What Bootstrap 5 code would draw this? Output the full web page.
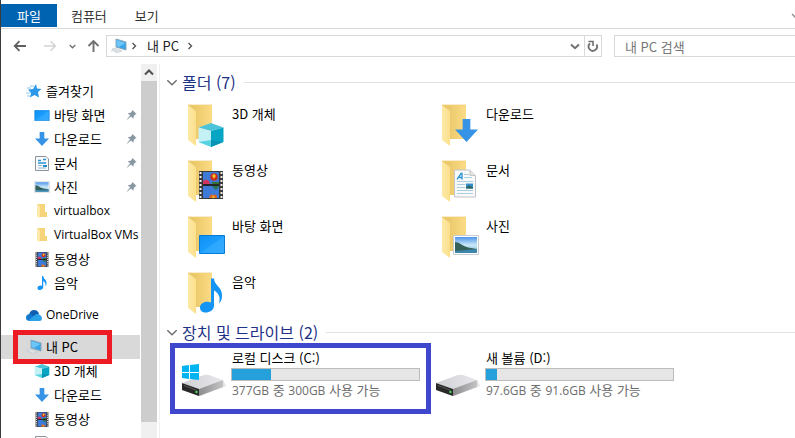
<!DOCTYPE html>
<html lang="ko">
<head>
<meta charset="utf-8">
<meta name="viewport" content="width=device-width, initial-scale=1">
<title>내 PC</title>
<link href="https://cdn.jsdelivr.net/npm/bootstrap@5.3.0/dist/css/bootstrap.min.css" rel="stylesheet">
<style>
body{font-family:"Noto Sans CJK KR",sans-serif;font-size:13px;line-height:18px;color:#000;background:#fff}
.window{border-left:1px solid #3c3c3c}
button{line-height:18px}
.latin{font-family:"Open Sans","Noto Sans",sans-serif;font-size:12px}
.tabs{height:29px;padding-top:4px;border-bottom:1px solid #dadbdc}
.tab{border:0;background:none;padding:0 14px;height:23px;color:#333}
.tab.current{background:#0063b1;color:#fff;padding:0 16px}
.ribbon-toggle{width:10px;height:23px;flex:none}
.tool{border:0;background:none;padding:0;color:#707070;display:flex;align-items:center;justify-content:center}
.toolbar{height:35px;padding:6px 0 7px 12px}
.arrow{width:14px}
.recent{width:8px;margin:0 10px 0 11px}
.address{border:1px solid #d9d9d9;height:22px;margin-left:6px}
.address a{color:#222;padding-left:2px}
.refresh{width:17px;border-left:1px solid #d9d9d9}
.search{width:182px;height:22px;margin:0 -1px 0 12px;border:1px solid #d9d9d9;padding:0 10px;font-size:13px;line-height:18px;outline:0}
.search::placeholder{color:#767676;opacity:1}
.side{width:139px;padding-top:15px}
.side a{height:24px;color:#000;padding-left:25px;white-space:nowrap;flex:none}
.side a.child{padding-left:33px}
.side a.selected{background:#d9d9d9}
.side svg{flex:none}
.side .pin{margin-left:auto;margin-right:3px}
.bar{width:17px;background:#f0f0f0;border-right:1px solid #fff;margin-left:1px}
.bar button{height:17px;width:16px}
.thumb{background:#cdcdcd;flex:0 1 341px}
.pane{border-left:1px solid #f0f0f0;margin-left:1px;padding:7px 0 0 6px;min-width:0}
.group-head{padding-top:1px;margin-bottom:9px}
.group-head.drives{margin-bottom:6px}
.group-title{font-size:16px;line-height:20px;color:#1e3287;margin:0;font-weight:400}
.rule{height:1px;background:#e2e2e2}
.tiles{display:grid;grid-template-columns:repeat(auto-fill,254px);row-gap:4px;padding-left:14px}
.tile{height:52px;color:#000}
.tile svg{flex:none}
.tile .label{padding:4px 0 0 1px}
.drive{color:#000}
.name{line-height:20px;padding-left:1px}
.free{line-height:17px;color:#6d6d6d;padding-left:1px}
.usage{width:189px;height:13px;border:1px solid #bcbcbc;border-radius:0;background:#e6e6e6}
.usage .progress-bar{background:#26a0da}
.outline{pointer-events:none}
.outline.red{border:5px solid #ed1c24;left:12px;top:-5px;width:99px;height:34px}
.outline.blue{border:5px solid #3f48cc;left:-10px;top:-5px;width:261px;height:71px}
</style>
<script src="https://cdn.jsdelivr.net/npm/bootstrap@5.3.0/dist/js/bootstrap.bundle.min.js"></script>
</head>
<body>
<svg width="0" height="0" class="position-absolute" aria-hidden="true">
<defs>
<linearGradient id="gBack" x1="0" x2="1"><stop offset="0" stop-color="#e5c160"/><stop offset="1" stop-color="#fbdc85"/></linearGradient>
<linearGradient id="gFlap" x1="0" x2="1"><stop offset="0" stop-color="#fde9a6"/><stop offset="1" stop-color="#fbdf8c"/></linearGradient>
<linearGradient id="gBlue" x1="0" y1="0" x2="1" y2="1"><stop offset="0" stop-color="#0c90f5"/><stop offset=".5" stop-color="#1a9dfc"/><stop offset=".52" stop-color="#2ba7ff"/><stop offset="1" stop-color="#37abff"/></linearGradient>
<linearGradient id="gSky" x1="0" y1="0" x2="0" y2="1"><stop offset="0" stop-color="#4d94ea"/><stop offset=".5" stop-color="#c9e8f8"/><stop offset="1" stop-color="#79b7d8"/></linearGradient>
<linearGradient id="gDisk" x1="0" x2="1"><stop offset="0" stop-color="#cfd0d4"/><stop offset="1" stop-color="#e8e8ec"/></linearGradient>
<linearGradient id="gSide" x1="0" x2="1"><stop offset="0" stop-color="#8d8d90"/><stop offset="1" stop-color="#c3c3c6"/></linearGradient>
</defs>
<symbol id="folder" viewBox="-4 0 51 48"><path d="M4 4H28V38H12z" fill="url(#gBack)"/><path d="M4 4L12 10V45L4 39z" fill="url(#gFlap)"/><path d="M4 4H28" stroke="#f2d27c" stroke-width=".8"/></symbol>
<symbol id="cube" viewBox="0 0 26 24"><path d="M13 0L25.500 4.500 13 8 .5 4.500z" fill="#4cc3d9"/><path d="M.5 4.500L13 8V24L.5 19z" fill="#c4f1f6"/><path d="M13 8L25.500 4.500V19L13 24z" fill="#08a5c5"/><path d="M13 17L25 19 13 24z" fill="#0794b4"/><path d="M13 17L.5 19 13 24z" fill="#59d3e2"/></symbol>
<symbol id="down" viewBox="0 0 24 24"><path d="M8 0H16V11H24L12 24 0 11H8z" fill="#3793e6"/></symbol>
<symbol id="film" viewBox="0 0 24 28"><path d="M0 0H24V28H0z" fill="#393939"/><path d="M1.500 1V28M22.500 1V28" stroke="#eee" stroke-width="2" stroke-dasharray="2 2"/><path d="M4 1H20V13H4zM4 15H20V27H4z" fill="#3e7bd8"/><circle cx="15" cy="6" r="3.700" fill="#c82c20"/><path d="M13 5L15 2.500 17 5 15 8z" fill="#f2bb22"/><path d="M4 10Q7 7 10 10L11 13H4z" fill="#cf355f"/><path d="M12 11H20V13H14z" fill="#327339"/><path d="M4 14H20" stroke="#222" stroke-width="1.500"/><path d="M13 15H20L17 19z" fill="#257348"/><path d="M10 27Q11 22 14 24 18 22 18 27z" fill="#d9652a"/><path d="M13 27L14 24 16 27z" fill="#f2bb22"/></symbol>
<symbol id="desk" viewBox="0 0 26 19"><path d="M.5.5H25.500V18.500H.5z" fill="url(#gBlue)" stroke="#087bd5"/></symbol>
<symbol id="note" viewBox="0 0 22 34"><path d="M11 0H14C14 7 22 8 22 17 22 21 21 23 19 25 21 18 18 14 14 12V27C14 32 9 34 6 34 2 34 0 32 0 29 0 25 5 22 11 24z" fill="#1494f5"/></symbol>
<symbol id="doc" viewBox="0 0 22 28"><path d="M.5.5H16L21.500 6V27.500H.5z" fill="#f9f9f9" stroke="#c4c4c8"/><path d="M16 .5V6H21.500" fill="#e5e5e5" stroke="#c4c4c8"/><path d="M3 10L7 4H8V10M5 8H8" fill="none" stroke="#2490cf" stroke-width="1.300"/><path d="M10 5H15M10 8H18M3 12H19M3 15H11M3 18H11M3 21H19M3 24H19" stroke="#a9cfe2" stroke-width="1"/><path d="M12 14H19V19H12z" fill="#328cca"/><path d="M12 18L15 16 19 18V19H12z" fill="#2a6355"/></symbol>
<symbol id="smalldoc" viewBox="0 0 14 15"><path d="M1 .5H11L13.500 3V14.500H.5V.5z" fill="#fafafa" stroke="#8b949c"/><path d="M3 4.500H6M8 3.500H11M3 7H11" stroke="#2b94d8" stroke-width="1.500"/><path d="M3 9.500H7M3 12H11" stroke="#8fb6d0"/><path d="M8 9H12V11H8z" fill="#2889c9"/></symbol>
<symbol id="photo" viewBox="0 0 26 20"><path d="M.5.5H25.500V19.500H.5z" fill="#fff" stroke="#c6ccd1"/><path d="M2 2H24V18H2z" fill="url(#gSky)"/><path d="M2 7C7 7 10 12 18 13L24 14V16H2z" fill="#35605a"/><path d="M2 16L24 14V18H2z" fill="#3d85ab"/></symbol>
<symbol id="disk" viewBox="-4 0 51 48"><path d="M-2 42L15 48.500 42 38 39 32z" fill="#e4e4e4"/><path d="M-2 35L20 27Q22 26.500 25 27L39 32 15 41z" fill="url(#gDisk)"/><path d="M15 41L39 32V39L15 48z" fill="url(#gSide)"/><path d="M-2 35L15 41V48L-2 42z" fill="#292929"/><path d="M0 37.500L12 42V45" fill="none" stroke="#555"/><circle cx="12.500" cy="44" r="1.200" fill="#44d457"/></symbol>
<symbol id="pc" viewBox="0 0 16 16"><path d="M5 1L15 4V12L5 9z" fill="#36a5e9" stroke="#8da6b8"/><path d="M5.500 2L14.500 5 8 9 5.500 8z" fill="#6ec6f8"/><path d="M1 11L4 10 11 13 7 14.500z" fill="#dfe5e9" stroke="#bcc5cb" stroke-width=".6"/><path d="M0 13L2 12.500 6 15" fill="none" stroke="#cbd2d8"/></symbol>
<symbol id="pinned" viewBox="0 0 12 12"><path d="M7 .5L11.500 5 10 5.500 8.500 7 8 10 5.500 7.500 1.500 11 1 10.500 4.500 6.500 2 4 5 3.500 6.500 2z" fill="#8997a3"/></symbol>
<symbol id="minifolder" viewBox="0 0 10 14"><path d="M0 0H8V8H10V13H3z" fill="#f6d479"/><path d="M0 0L3 2V14L0 12.500z" fill="#ffe9a8"/></symbol>
<symbol id="chev" viewBox="0 0 10 6"><path d="M1 1L5 5 9 1" fill="none" stroke="#6d6d6d" stroke-width="1.200"/></symbol>
<symbol id="boldchev" viewBox="0 0 10 6"><path d="M1 1L5 4.700 9 1" fill="none" stroke="currentColor" stroke-width="2"/></symbol>
<symbol id="next" viewBox="0 0 5 8"><path d="M1 1L4 4 1 7" fill="none" stroke="#555" stroke-width="1.400"/></symbol>
</svg>

<div class="window vh-100 d-flex flex-column overflow-hidden">
<header>
  <div class="tabs d-flex align-items-start">
    <button class="tab current" type="button">파일</button>
    <button class="tab" type="button">컴퓨터</button>
    <button class="tab" type="button">보기</button>
    <button class="tool ribbon-toggle ms-auto" type="button" aria-label="리본 확장"><svg width="10" height="6" viewBox="-6 0 10 6"><path d="M1 1L5 5" stroke="#888" stroke-width="1.300"/></svg></button>
  </div>
  <div class="toolbar d-flex align-items-center">
    <button class="tool arrow" type="button" aria-label="뒤로"><svg width="14" height="12" viewBox="0 0 14 12" fill="none" stroke="#606060" stroke-width="1.800"><path d="M13 6H2M6.500 1.200L1.700 6 6.500 10.800"/></svg></button>
    <button class="tool arrow ms-3" type="button" aria-label="앞으로"><svg width="14" height="12" viewBox="0 0 14 12" fill="none" stroke="#d4d4d4" stroke-width="1.600"><path d="M1 6H12M7.500 1.200L12.300 6 7.500 10.800"/></svg></button>
    <button class="tool recent" type="button" aria-label="최근 위치"><svg width="7" height="5"><use href="#boldchev"/></svg></button>
    <button class="tool arrow" type="button" aria-label="위로"><svg width="13" height="14" viewBox="0 0 13 14" fill="none" stroke="#707070" stroke-width="1.900"><path d="M6.500 13V2M1.500 7L6.500 2 11.500 7"/></svg></button>
    <div class="address d-flex align-items-stretch flex-grow-1">
      <div class="d-flex align-items-center flex-grow-1 ps-1">
        <svg width="16" height="16"><use href="#pc"/></svg>
        <svg class="ms-1" width="6" height="8"><use href="#next"/></svg>
        <a href="#" class="text-decoration-none mx-2">내 PC</a>
        <svg width="6" height="8"><use href="#next"/></svg>
      </div>
      <button class="tool px-1" type="button" aria-label="이전 위치"><svg width="10" height="7"><use href="#boldchev"/></svg></button>
      <button class="tool refresh" type="button" aria-label="새로 고침"><svg width="12" height="13" viewBox="0 0 12 13"><path d="M3 3.500A4.200 4.200 0 1 0 9.500 4.500" fill="none" stroke="#707070" stroke-width="1.800"/><path d="M1.500 1.500H6V6" fill="none" stroke="#707070" stroke-width="1.600"/></svg></button>
    </div>
    <input class="search" type="text" placeholder="내 PC 검색" aria-label="내 PC 검색">
  </div>
</header>
<div class="d-flex flex-grow-1 overflow-hidden">
  <nav class="side d-flex flex-column flex-shrink-0 overflow-hidden" aria-label="탐색 창">
    <a href="#" class="d-flex align-items-center gap-1 text-decoration-none"><svg width="16" height="14" viewBox="0 0 16 14"><path d="M10 0L11 4.500 15.500 5 12 8 13 13.500 8.500 11 4 13.500 5 9 2 5.500 7 5z" fill="#2b98e8"/><path d="M4 2H8M1 4H5M0 9H4M1 12H4" stroke="#8fcaf2"/></svg>즐겨찾기</a>
    <a href="#" class="child d-flex align-items-center text-decoration-none"><svg class="me-1" width="16" height="11"><use href="#desk"/></svg>바탕 화면<svg class="pin" width="11" height="12"><use href="#pinned"/></svg></a>
    <a href="#" class="child d-flex align-items-center text-decoration-none"><svg class="me-1" width="16" height="14"><use href="#down"/></svg>다운로드<svg class="pin" width="11" height="12"><use href="#pinned"/></svg></a>
    <a href="#" class="child d-flex align-items-center text-decoration-none"><svg class="me-1" width="16" height="15"><use href="#smalldoc"/></svg>문서<svg class="pin" width="11" height="12"><use href="#pinned"/></svg></a>
    <a href="#" class="child d-flex align-items-center text-decoration-none"><svg class="me-1" width="16" height="12"><use href="#photo"/></svg>사진<svg class="pin" width="11" height="12"><use href="#pinned"/></svg></a>
    <a href="#" class="child d-flex align-items-center text-decoration-none"><svg class="me-1" width="16" height="14"><use href="#minifolder"/></svg><span class="latin">virtualbox</span></a>
    <a href="#" class="child d-flex align-items-center text-decoration-none"><svg class="me-1" width="16" height="14"><use href="#minifolder"/></svg><span class="latin">VirtualBox VMs</span></a>
    <a href="#" class="child d-flex align-items-center text-decoration-none"><svg class="me-1" width="16" height="15"><use href="#film"/></svg>동영상</a>
    <a href="#" class="child d-flex align-items-center text-decoration-none"><svg class="me-1" width="16" height="14"><use href="#note"/></svg>음악</a>
    <a href="#" class="d-flex align-items-center gap-1 text-decoration-none mt-2"><svg width="16" height="11" viewBox="0 0 16 11"><path d="M3 5Q4 0 8 0 12 0 13 4L8 8z" fill="#0f5fb3"/><path d="M0 8Q0 4 4 4L12 9 4 11Q0 11 0 8z" fill="#1279cf"/><path d="M3 10L9 5Q11 3 14 5 16 6 16 8.500 16 11 13 11H4z" fill="#2aa2e8"/></svg><span class="latin">OneDrive</span></a>
    <a href="#" class="selected position-relative d-flex align-items-center gap-1 text-decoration-none mt-2 overflow-visible"><svg width="16" height="16"><use href="#pc"/></svg>내 PC<span class="outline red position-absolute"></span></a>
    <a href="#" class="child d-flex align-items-center text-decoration-none"><svg class="me-1" width="16" height="14"><use href="#cube"/></svg>3D 개체</a>
    <a href="#" class="child d-flex align-items-center text-decoration-none"><svg class="me-1" width="16" height="14"><use href="#down"/></svg>다운로드</a>
    <a href="#" class="child d-flex align-items-center text-decoration-none"><svg class="me-1" width="16" height="15"><use href="#film"/></svg>동영상</a>
    <a href="#" class="child d-flex align-items-center text-decoration-none" aria-label="문서"><svg width="16" height="15"><use href="#smalldoc"/></svg></a>
  </nav>
  <div class="bar d-flex flex-column flex-shrink-0">
    <button class="tool" type="button" aria-label="위로 스크롤"><svg width="10" height="7" viewBox="0 0 10 7"><path d="M1 5.500L5 1.500 9 5.500" fill="none" stroke="#505050" stroke-width="2"/></svg></button>
    <div class="thumb"></div>
  </div>
  <main class="pane flex-grow-1">
    <div class="group-head d-flex align-items-center"><svg class="me-1" width="12" height="7"><use href="#chev"/></svg><h2 class="group-title me-2">폴더 (7)</h2><div class="rule flex-grow-1"></div></div>
    <div class="tiles">
      <a href="#" class="tile d-flex text-decoration-none"><svg width="51" height="48"><use href="#folder"/><use href="#cube" x="18" y="22" width="26" height="24"/></svg><span class="label">3D 개체</span></a>
      <a href="#" class="tile d-flex text-decoration-none"><svg width="51" height="48"><use href="#folder"/><use href="#down" x="21" y="18" width="23" height="23"/></svg><span class="label">다운로드</span></a>
      <a href="#" class="tile d-flex text-decoration-none"><svg width="51" height="48"><use href="#folder"/><use href="#film" x="19" y="14" width="24" height="28"/></svg><span class="label">동영상</span></a>
      <a href="#" class="tile d-flex text-decoration-none"><svg width="51" height="48"><use href="#folder"/><use href="#doc" x="20" y="12" width="22" height="29"/></svg><span class="label">문서</span></a>
      <a href="#" class="tile d-flex text-decoration-none"><svg width="51" height="48"><use href="#folder"/><use href="#desk" x="19" y="22" width="26" height="19"/></svg><span class="label">바탕 화면</span></a>
      <a href="#" class="tile d-flex text-decoration-none"><svg width="51" height="48"><use href="#folder"/><use href="#photo" x="19" y="22" width="26" height="20"/></svg><span class="label">사진</span></a>
      <a href="#" class="tile d-flex text-decoration-none"><svg width="51" height="48"><use href="#folder"/><use href="#note" x="20" y="9" width="22" height="35"/></svg><span class="label">음악</span></a>
    </div>
    <div class="group-head drives d-flex align-items-center"><svg class="me-1" width="12" height="7"><use href="#chev"/></svg><h2 class="group-title me-2">장치 및 드라이브 (2)</h2><div class="rule flex-grow-1"></div></div>
    <div class="tiles">
      <a href="#" class="drive position-relative d-flex text-decoration-none"><svg width="51" height="50"><use href="#disk" width="51" height="48"/><path d="M2 18L9 17V24H2zM10 17L19 16V24H10zM2 25H9V31L2 30zM10 25H19V32L10 31z" fill="#00b4f1"/></svg>
        <div><div class="name">로컬 디스크 (C:)</div><div class="usage progress"><div class="progress-bar" style="width:21%"></div></div><div class="free"><span class="latin">377GB</span> 중 <span class="latin">300GB</span> 사용 가능</div></div><span class="outline blue position-absolute"></span></a>
      <a href="#" class="drive d-flex text-decoration-none"><svg width="51" height="50"><use href="#disk" width="51" height="48"/></svg>
        <div><div class="name">새 볼륨 (D:)</div><div class="usage progress"><div class="progress-bar" style="width:6%"></div></div><div class="free"><span class="latin">97.6GB</span> 중 <span class="latin">91.6GB</span> 사용 가능</div></div></a>
    </div>
  </main>
</div>
</div>
</body>
</html>
